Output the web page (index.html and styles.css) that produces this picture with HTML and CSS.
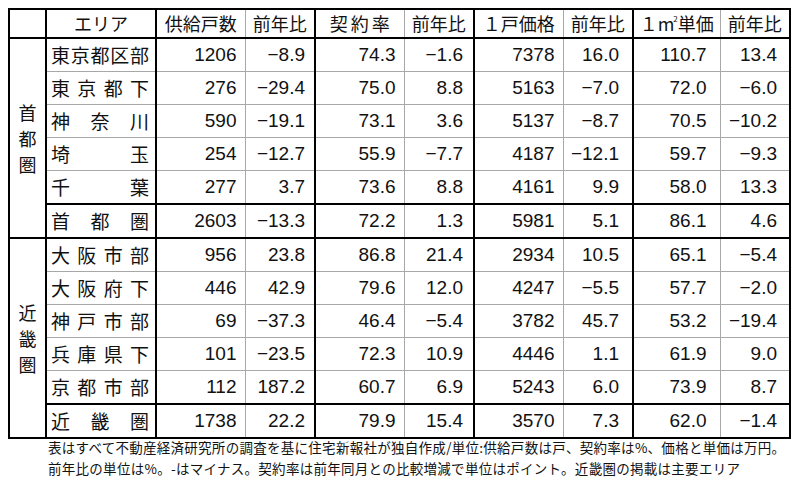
FILE: index.html
```html
<!DOCTYPE html>
<html lang="ja">
<head>
  <meta charset="UTF-8">
  <title>マンション市場動向</title>
  <link rel="stylesheet" href="styles.css">
</head>
<body>
  <table class="stats">
    <colgroup>
      <col class="c-region">
      <col class="c-area">
      <col class="c-wide">
      <col class="c-ratio">
      <col class="c-wide">
      <col class="c-ratio">
      <col class="c-wide">
      <col class="c-ratio">
      <col class="c-m2">
      <col class="c-ratio">
    </colgroup>
    <thead>
      <tr>
        <th class="corner"></th>
        <th>エリア</th>
        <th>供給戸数</th>
        <th>前年比</th>
        <th class="spaced">契約率</th>
        <th>前年比</th>
        <th>１戸価格</th>
        <th>前年比</th>
        <th>１m<sup>2</sup>単価</th>
        <th>前年比</th>
      </tr>
    </thead>
    <tbody>
      <tr>
        <th class="region" rowspan="6"><span>首</span><span>都</span><span>圏</span></th>
        <th class="area"><div class="spread"><span>東</span><span>京</span><span>都</span><span>区</span><span>部</span></div></th>
        <td>1206</td><td>−8.9</td><td>74.3</td><td>−1.6</td><td>7378</td><td>16.0</td><td>110.7</td><td>13.4</td>
      </tr>
      <tr>
        <th class="area"><div class="spread"><span>東</span><span>京</span><span>都</span><span>下</span></div></th>
        <td>276</td><td>−29.4</td><td>75.0</td><td>8.8</td><td>5163</td><td>−7.0</td><td>72.0</td><td>−6.0</td>
      </tr>
      <tr>
        <th class="area"><div class="spread"><span>神</span><span>奈</span><span>川</span></div></th>
        <td>590</td><td>−19.1</td><td>73.1</td><td>3.6</td><td>5137</td><td>−8.7</td><td>70.5</td><td>−10.2</td>
      </tr>
      <tr>
        <th class="area"><div class="spread"><span>埼</span><span>玉</span></div></th>
        <td>254</td><td>−12.7</td><td>55.9</td><td>−7.7</td><td>4187</td><td>−12.1</td><td>59.7</td><td>−9.3</td>
      </tr>
      <tr>
        <th class="area"><div class="spread"><span>千</span><span>葉</span></div></th>
        <td>277</td><td>3.7</td><td>73.6</td><td>8.8</td><td>4161</td><td>9.9</td><td>58.0</td><td>13.3</td>
      </tr>
      <tr class="total">
        <th class="area"><div class="spread"><span>首</span><span>都</span><span>圏</span></div></th>
        <td>2603</td><td>−13.3</td><td>72.2</td><td>1.3</td><td>5981</td><td>5.1</td><td>86.1</td><td>4.6</td>
      </tr>
    </tbody>
    <tbody>
      <tr>
        <th class="region" rowspan="6"><span>近</span><span>畿</span><span>圏</span></th>
        <th class="area"><div class="spread"><span>大</span><span>阪</span><span>市</span><span>部</span></div></th>
        <td>956</td><td>23.8</td><td>86.8</td><td>21.4</td><td>2934</td><td>10.5</td><td>65.1</td><td>−5.4</td>
      </tr>
      <tr>
        <th class="area"><div class="spread"><span>大</span><span>阪</span><span>府</span><span>下</span></div></th>
        <td>446</td><td>42.9</td><td>79.6</td><td>12.0</td><td>4247</td><td>−5.5</td><td>57.7</td><td>−2.0</td>
      </tr>
      <tr>
        <th class="area"><div class="spread"><span>神</span><span>戸</span><span>市</span><span>部</span></div></th>
        <td>69</td><td>−37.3</td><td>46.4</td><td>−5.4</td><td>3782</td><td>45.7</td><td>53.2</td><td>−19.4</td>
      </tr>
      <tr>
        <th class="area"><div class="spread"><span>兵</span><span>庫</span><span>県</span><span>下</span></div></th>
        <td>101</td><td>−23.5</td><td>72.3</td><td>10.9</td><td>4446</td><td>1.1</td><td>61.9</td><td>9.0</td>
      </tr>
      <tr>
        <th class="area"><div class="spread"><span>京</span><span>都</span><span>市</span><span>部</span></div></th>
        <td>112</td><td>187.2</td><td>60.7</td><td>6.9</td><td>5243</td><td>6.0</td><td>73.9</td><td>8.7</td>
      </tr>
      <tr class="total">
        <th class="area"><div class="spread"><span>近</span><span>畿</span><span>圏</span></div></th>
        <td>1738</td><td>22.2</td><td>79.9</td><td>15.4</td><td>3570</td><td>7.3</td><td>62.0</td><td>−1.4</td>
      </tr>
    </tbody>
  </table>

  <p class="note">表はすべて不動産経済研究所の調査を基に住宅新報社が独自作成/単位:供給戸数は戸、契約率は%、価格と単価は万円。<br>前年比の単位は%。-はマイナス。契約率は前年同月との比較増減で単位はポイント。近畿圏の掲載は主要エリア</p>
</body>
</html>
```

FILE: styles.css
```css
body {
  margin: 0;
  padding: 8px 0 0 8px;
  background: #fff;
  color: #111;
  font-family: "Liberation Sans", "Noto Sans CJK JP", sans-serif;
}

.stats {
  border-collapse: collapse;
  table-layout: fixed;
  width: 782px;
  border: 2px solid #000;
}

/* column widths; thick rules sit on the group edges */
.c-region { width: 37px; border-right: 2px solid #000; }
.c-area { width: 110px; border-right: 2px solid #000; }
.c-wide { width: 89px; }
.c-m2 { width: 87px; }
.c-ratio { width: 70px; border-right: 2px solid #000; }

.stats th,
.stats td {
  padding: 0;
  border: 1px solid #a8a8a8;
  height: 32px;
  font-weight: normal;
}

.stats thead th {
  height: 27px;
  border-bottom: 2px solid #000;
  font-family: "Noto Sans CJK JP", sans-serif;
  font-size: 18px;
  line-height: 1.2;
  text-align: center;
  white-space: nowrap;
}

.stats thead th.spaced {
  letter-spacing: 3px;
  text-indent: 3px;
}

.stats sup {
  font-size: 8px;
  vertical-align: 9px;
  margin-left: -1px;
}

.stats td {
  font-size: 19px;
  line-height: 1.2;
  text-align: right;
  padding-right: 8px;
}

.stats td:nth-last-child(7) { padding-right: 9px; }
.stats td:nth-last-child(5) { padding-right: 10px; }
.stats td:nth-last-child(3),
.stats td:nth-last-child(2) { padding-right: 13px; }
.stats td:nth-last-child(1) { padding-right: 12px; }

.stats th.region {
  border: 2px solid #000;
  font-family: "Noto Sans CJK JP", sans-serif;
  font-size: 18px;
  text-align: center;
}

.region span {
  display: block;
  line-height: 26px;
}

.stats th.area {
  border-left: 2px solid #000;
  border-right: 2px solid #000;
  font-family: "Noto Sans CJK JP", sans-serif;
  font-size: 19px;
  line-height: 1.2;
}

.spread {
  display: flex;
  justify-content: space-between;
  padding: 0 6px 0 4px;
}

.stats tr.total th,
.stats tr.total td {
  border-top: 2px solid #000;
  border-bottom: 2px solid #000;
}

.stats tr.total th.region {
  border-top: none;
}

.note {
  margin: -2px 0 0 40px;
  font-family: "Noto Sans CJK JP", sans-serif;
  font-size: 13.5px;
  letter-spacing: 0.28px;
  line-height: 21px;
  color: #111;
  white-space: nowrap;
}
```
